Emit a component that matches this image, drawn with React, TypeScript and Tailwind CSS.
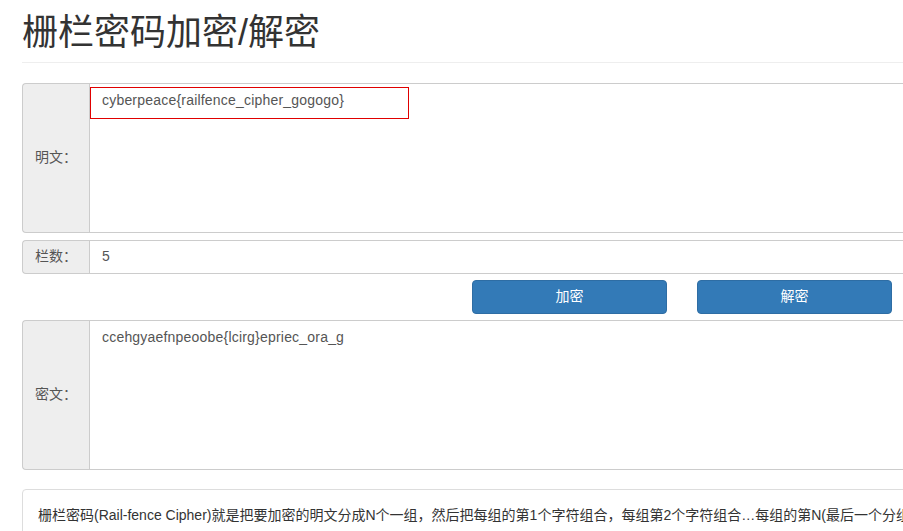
export default function App() {
  const font = { fontFamily: '"Liberation Sans", "Noto Sans CJK SC", sans-serif' };
  return (
    <div className="h-[531px] w-full overflow-hidden bg-white text-[14px] text-[#333]" style={font}>
      <div className="pl-[22px] pt-[13px]">
        <div className="w-[1140px]">
          <h1 className="mb-[20px] border-b border-[#eee] pb-[9px] text-[36px] font-normal leading-[1.1] text-[#333]">
            栅栏密码加密/解密
          </h1>

          <div className="flex h-[150px]">
            <div className="flex w-[67px] shrink-0 items-center whitespace-nowrap rounded-l-[4px] border border-r-0 border-[#ccc] bg-[#eee] px-[12px] text-[#555]">
              明文：
            </div>
            <div className="relative flex-1 border border-[#ccc] px-[12px] py-[6px] leading-[20px] tracking-[0.2px] text-[#555]">
              cyberpeace{"{"}railfence_cipher_gogogo{"}"}
              <div className="absolute left-0 top-[3px] h-[32px] w-[319px] border border-[#e00000]" />
            </div>
          </div>

          <div className="mt-[7px] flex h-[34px]">
            <div className="flex w-[67px] shrink-0 items-center whitespace-nowrap rounded-l-[4px] border border-r-0 border-[#ccc] bg-[#eee] px-[12px] text-[#555]">
              栏数：
            </div>
            <div className="flex flex-1 items-center border border-[#ccc] px-[12px] text-[#555]">
              5
            </div>
          </div>

          <div className="mt-[6px] flex gap-[30px] pl-[450px]">
            <button className="h-[34px] w-[195px] rounded-[4px] border border-[#2e6da4] bg-[#337ab7] text-white">
              加密
            </button>
            <button className="h-[34px] w-[195px] rounded-[4px] border border-[#2e6da4] bg-[#337ab7] text-white">
              解密
            </button>
          </div>

          <div className="mt-[6px] flex h-[150px]">
            <div className="flex w-[67px] shrink-0 items-center whitespace-nowrap rounded-l-[4px] border border-r-0 border-[#ccc] bg-[#eee] px-[12px] text-[#555]">
              密文：
            </div>
            <div className="flex-1 border border-[#ccc] px-[12px] py-[6px] leading-[20px] tracking-[0.2px] text-[#555]">
              ccehgyaefnpeoobe{"{"}lcirg{"}"}epriec_ora_g
            </div>
          </div>

          <div className="mt-[19px] whitespace-nowrap rounded-[4px] border border-[#ddd] p-[15px] leading-[20px] text-[#333]">
            栅栏密码(Rail-fence Cipher)就是把要加密的明文分成N个一组，然后把每组的第1个字符组合，每组第2个字符组合…每组的第N(最后一个分组可能不足N个)个字符组合
          </div>
        </div>
      </div>
    </div>
  );
}
